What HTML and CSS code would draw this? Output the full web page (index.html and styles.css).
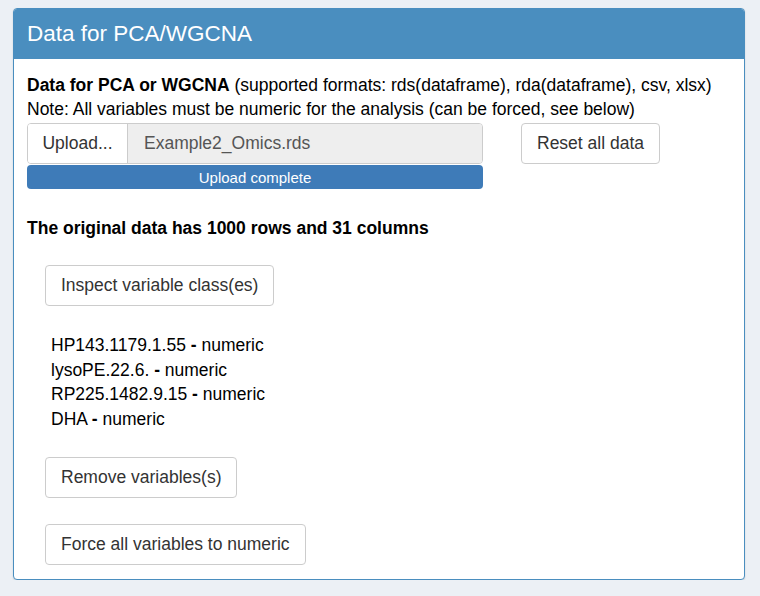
FILE: index.html
```html
<!DOCTYPE html>
<html>
<head>
<meta charset="utf-8">
<link rel="stylesheet" href="styles.css">
</head>
<body>
<div class="box">
  <div class="box-header">Data for PCA/WGCNA</div>
  <div class="box-body">
    <div class="intro">
      <div><b>Data for PCA or WGCNA</b> (supported formats: rds(dataframe), rda(dataframe), csv, xlsx)</div>
      <div>Note: All variables must be numeric for the analysis (can be forced, see below)</div>
    </div>
    <div class="upload-row">
      <div class="upload-col">
        <div class="input-group">
          <span class="btn-upload">Upload...</span>
          <span class="file-name">Example2_Omics.rds</span>
        </div>
        <div class="progress">Upload complete</div>
      </div>
      <button class="btn reset">Reset all data</button>
    </div>
    <div class="summary">The original data has 1000 rows and 31 columns</div>
    <div class="inner">
      <button class="btn">Inspect variable class(es)</button>
      <ul class="vars">
        <li>HP143.1179.1.55 <b>-</b> numeric</li>
        <li>lysoPE.22.6. <b>-</b> numeric</li>
        <li>RP225.1482.9.15 <b>-</b> numeric</li>
        <li>DHA <b>-</b> numeric</li>
      </ul>
      <button class="btn">Remove variables(s)</button>
      <button class="btn force">Force all variables to numeric</button>
    </div>
  </div>
</div>
</body>
</html>
```
FILE: styles.css
```css
* { box-sizing: border-box; }
html, body { margin: 0; padding: 0; }
body {
  background: #ecf0f5;
  font-family: "Liberation Sans", Arial, sans-serif;
  font-size: 17.5px;
  color: #000;
  padding: 8px 15px 0 13px;
}
.box {
  width: 732px;
  height: 572px;
  background: #fff;
  border: 1px solid #4a8ebf;
  border-radius: 4px;
  box-shadow: 0 1px 2px rgba(0,0,0,0.12);
  overflow: hidden;
}
.box-header {
  background: #4a8ebf;
  color: #fff;
  height: 50px;
  font-size: 22.5px;
  padding: 0 13px;
  display: flex;
  align-items: center;
}
.box-body {
  padding: 14px 13px;
}
.intro { line-height: 24px; }
.upload-row {
  display: flex;
  align-items: flex-start;
  gap: 38px;
  margin-top: 2px;
}
.upload-col { width: 456px; }
.input-group {
  display: flex;
  height: 41px;
  border: 1px solid #ccc;
  border-radius: 4px;
  overflow: hidden;
  color: #333;
}
.btn-upload {
  width: 100px;
  background: #fff;
  border-right: 1px solid #ccc;
  display: flex;
  align-items: center;
  justify-content: center;
}
.file-name {
  flex: 1;
  background: #eee;
  color: #555;
  display: flex;
  align-items: center;
  padding-left: 16px;
}
.progress {
  margin-top: 1px;
  height: 24px;
  background: #3e7bb8;
  color: #fff;
  font-size: 15px;
  border-radius: 4px;
  text-align: center;
  line-height: 25px;
}
.btn {
  display: block;
  font-family: inherit;
  font-size: 17.5px;
  color: #333;
  background: #fff;
  border: 1px solid #ccc;
  border-radius: 4px;
  height: 41px;
  padding: 0 15px;
}
.summary {
  font-weight: bold;
  margin-top: 27px;
  line-height: 24px;
}
.inner { padding-left: 18px; margin-top: 25px; }
.vars {
  list-style: none;
  margin: 27px 0 0 6px;
  padding: 0;
  line-height: 24.5px;
}
.vars + .btn { margin-top: 26px; }
.force { margin-top: 26px; }
```
